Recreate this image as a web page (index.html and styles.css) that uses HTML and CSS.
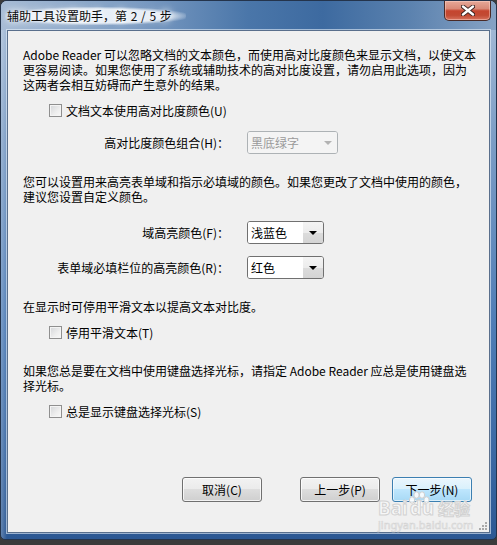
FILE: index.html
```html
<!DOCTYPE html>
<html lang="zh-CN">
<head>
<meta charset="utf-8">
<title>辅助工具设置助手</title>
<link rel="stylesheet" href="styles.css">
</head>
<body>
<div class="window">
  <div class="titlebar">
    <span class="title">辅助工具设置助手，第 2 / 5 步</span>
    <div class="close">
      <svg width="14" height="11" viewBox="0 0 14 11">
        <path d="M2 1.5 L12 9.5 M12 1.5 L2 9.5" stroke="#3a2220" stroke-width="4.2" stroke-linecap="round"/>
        <path d="M2 1.5 L12 9.5 M12 1.5 L2 9.5" stroke="#ffffff" stroke-width="2.4" stroke-linecap="round"/>
      </svg>
    </div>
  </div>
  <div class="client">
    <p class="para p1">Adobe Reader 可以忽略文档的文本颜色，而使用高对比度颜色来显示文档，以使文本<br>更容易阅读。如果您使用了系统或辅助技术的高对比度设置，请勿启用此选项，因为<br>这两者会相互妨碍而产生意外的结果。</p>
    <label class="check c1"><span class="box"></span><span>文档文本使用高对比度颜色(U)</span></label>
    <div class="field f-h">
      <span class="flabel">高对比度颜色组合(H)：</span>
      <div class="combo wide disabled"><span class="ctext">黑底绿字</span><span class="arrow"></span></div>
    </div>
    <p class="para p2">您可以设置用来高亮表单域和指示必填域的颜色。如果您更改了文档中使用的颜色，<br>建议您设置自定义颜色。</p>
    <div class="field f-f">
      <span class="flabel">域高亮颜色(F)：</span>
      <div class="combo"><span class="ctext">浅蓝色</span><span class="arrow"></span></div>
    </div>
    <div class="field f-r">
      <span class="flabel">表单域必填栏位的高亮颜色(R)：</span>
      <div class="combo"><span class="ctext">红色</span><span class="arrow"></span></div>
    </div>
    <p class="para p3">在显示时可停用平滑文本以提高文本对比度。</p>
    <label class="check c2"><span class="box"></span><span>停用平滑文本(T)</span></label>
    <p class="para p4">如果您总是要在文档中使用键盘选择光标，请指定 Adobe Reader 应总是使用键盘选<br>择光标。</p>
    <label class="check c3"><span class="box"></span><span>总是显示键盘选择光标(S)</span></label>
    <div class="buttons">
      <button class="btn cancel">取消(C)</button>
      <button class="btn">上一步(P)</button>
      <button class="btn default">下一步(N)</button>
    </div>
    <div class="watermark">
      <svg class="paw" width="26" height="18" viewBox="0 0 26 18">
        <g fill="#ffffff" fill-opacity="0.85" stroke="#cfcfcf" stroke-width="1">
          <ellipse cx="6" cy="9" rx="2.6" ry="3.2"/>
          <ellipse cx="10.5" cy="4" rx="2.6" ry="3.2"/>
          <ellipse cx="16" cy="4" rx="2.6" ry="3.2"/>
          <ellipse cx="20.5" cy="9" rx="2.6" ry="3.2"/>
          <path d="M8 16 C8 11 11 9 13 9 C15 9 18 11 18 16 Z"/>
        </g>
      </svg>
      <div class="wm-main">Bai<span class="wm-du">du</span><span class="wm-cn">经验</span></div>
      <div class="wm-url">jingyan.baidu.com</div>
    </div>
    <svg class="grip" width="10" height="10" viewBox="0 0 10 10">
      <g fill="#a9a9a9">
        <rect x="7" y="1" width="2" height="2"/>
        <rect x="4" y="4" width="2" height="2"/>
        <rect x="7" y="4" width="2" height="2"/>
        <rect x="1" y="7" width="2" height="2"/>
        <rect x="4" y="7" width="2" height="2"/>
        <rect x="7" y="7" width="2" height="2"/>
      </g>
    </svg>
  </div>
</div>
</body>
</html>
```

FILE: styles.css
```css
html, body {
  margin: 0;
  padding: 0;
}
body {
  width: 497px;
  height: 545px;
  background: #3b3b3b;
  font-family: "Noto Sans CJK SC", "Noto Sans", sans-serif;
  font-size: 12px;
  color: #000;
  overflow: hidden;
}
.window {
  box-sizing: border-box;
  width: 497px;
  height: 540px;
  border: 1px solid #24344c;
  border-radius: 7px 7px 5px 5px;
  display: flex;
  flex-direction: column;
  overflow: hidden;
  background:
    linear-gradient(90deg, rgba(255,255,255,0.25) 0px, rgba(255,255,255,0) 6px),
    linear-gradient(180deg, #a9bed8 0%, #7d9ec6 25%, #4f7db6 60%, #3a68a3 85%, #2c5893 100%);
}
.titlebar {
  height: 29px;
  flex: none;
  display: flex;
  align-items: flex-start;
  background: linear-gradient(90deg, #a7bcd5 0%, #7b9bc2 28%, #4a76a9 50%, #3d6aa0 65%, #5a81ae 82%, #86a2c4 100%);
}
.title {
  margin-top: 6px;
  margin-left: 4px;
  line-height: 18px;
  color: #0b0b0b;
  white-space: nowrap;
  word-spacing: 1px;
  border-radius: 10px;
  background: radial-gradient(ellipse at center, rgba(236,242,249,0.95) 55%, rgba(236,242,249,0) 75%);
  padding: 0 14px 0 2px;
  text-shadow: 0 0 6px #fff, 0 0 10px #fff;
}
.close {
  margin-left: auto;
  margin-right: 5px;
  width: 47px;
  height: 20px;
  box-sizing: border-box;
  border: 1px solid #4a2a26;
  border-top: none;
  border-radius: 0 0 5px 5px;
  background: linear-gradient(180deg, #e6a898 0%, #d98a78 40%, #c5452f 52%, #c24a33 75%, #d7735e 100%);
  box-shadow: inset 0 0 0 1px rgba(255,220,210,0.45);
  display: flex;
  align-items: center;
  justify-content: center;
}
.close svg { display: block; }
.client {
  flex: 1;
  margin: 0 6px 6px 6px;
  border: 1px solid #596f8c;
  box-shadow: 0 0 0 1px rgba(230,240,250,0.6);
  background: #f0f0f0;
  padding: 0 17px 30px 15px;
  display: flex;
  flex-direction: column;
  position: relative;
}
.para {
  margin: 0;
  line-height: 15px;
  white-space: nowrap;
}
.p1 { margin-top: 16px; }
.p2 { margin-top: 20px; }
.p3 { margin-top: 20px; }
.p4 { margin-top: 23px; }

.check {
  display: flex;
  align-items: center;
  line-height: 15px;
  height: 15px;
  margin-left: 26px;
  gap: 4px;
}
.c1 { margin-top: 11px; }
.c2 { margin-top: 11px; }
.c3 { margin-top: 11px; }
.box {
  width: 13px;
  height: 13px;
  box-sizing: border-box;
  border: 1px solid #8f8f8f;
  background: linear-gradient(135deg, #d3d5d8 0%, #eeeeee 60%, #f8f8f8 100%);
  box-shadow: inset 0 0 0 1px #f4f4f4;
  flex: none;
}

.field {
  display: flex;
  align-items: center;
  height: 23px;
}
.f-h { margin-top: 13px; }
.f-f { margin-top: 17px; }
.f-r { margin-top: 12px; }
.flabel {
  width: 206px;
  text-align: right;
  white-space: nowrap;
  margin-right: 18px;
  flex: none;
}
.combo {
  box-sizing: border-box;
  width: 77px;
  height: 23px;
  border: 1px solid #707070;
  border-radius: 3px;
  display: flex;
  overflow: hidden;
  background: #fff;
}
.combo.wide { width: 91px; }
.ctext {
  flex: 1;
  padding-left: 3px;
  line-height: 21px;
  white-space: nowrap;
  background: #fff;
}
.arrow {
  width: 20px;
  flex: none;
  position: relative;
  background: linear-gradient(180deg, #f4f4f4 0%, #ececec 50%, #dcdcdc 51%, #d4d4d4 100%);
}
.arrow::after {
  content: "";
  position: absolute;
  left: 6px;
  top: 9px;
  border-left: 4px solid transparent;
  border-right: 4px solid transparent;
  border-top: 4px solid #000;
}
.combo.disabled {
  border-color: #adb2b5;
  background: #f4f4f4;
}
.combo.disabled .ctext {
  background: #f4f4f4;
  color: #9a9a9a;
}
.combo.disabled .arrow {
  background: #f4f4f4;
}
.combo.disabled .arrow::after {
  border-top-color: #b3b3b3;
  left: 7px;
}

.buttons {
  margin-top: auto;
  display: flex;
  justify-content: flex-end;
  gap: 12px;
}
.btn {
  box-sizing: border-box;
  width: 80px;
  height: 25px;
  font-family: inherit;
  font-size: 12px;
  color: #000;
  border: 1px solid #707070;
  border-radius: 3px;
  padding: 0;
  background: linear-gradient(180deg, #f2f2f2 0%, #ebebeb 48%, #dddddd 50%, #cfcfcf 100%);
  box-shadow: inset 0 0 0 1px rgba(255,255,255,0.75);
}
.btn.cancel { margin-right: 26px; }
.btn.default {
  border-color: #3c7fb1;
  background: linear-gradient(180deg, #eaf6fd 0%, #d9f0fc 48%, #bee6fd 50%, #a7d9f5 100%);
  box-shadow: inset 0 0 0 1px rgba(255,255,255,0.6);
}

.watermark {
  position: absolute;
  right: 19px;
  bottom: 0px;
  width: 92px;
  height: 42px;
  pointer-events: none;
}
.paw {
  position: absolute;
  left: 28px;
  top: 1px;
}
.wm-main {
  position: absolute;
  left: 0;
  top: 9px;
  font-family: "Noto Sans", "Noto Sans CJK SC", sans-serif;
  font-size: 19px;
  font-weight: bold;
  line-height: 19px;
  color: rgba(248,248,248,0.9);
  -webkit-text-stroke: 1px #d2d2d2;
  white-space: nowrap;
}
.wm-du { margin-left: 2px; }
.wm-cn {
  font-family: "Noto Sans CJK SC", sans-serif;
  font-size: 16px;
  margin-left: 4px;
}
.wm-url {
  position: absolute;
  left: 0;
  top: 29px;
  font-family: "Noto Sans", sans-serif;
  font-size: 11px;
  line-height: 12px;
  color: #f4f4f4;
  -webkit-text-stroke: 0.6px #d4d4d4;
  white-space: nowrap;
}
.grip {
  position: absolute;
  right: 1px;
  bottom: 1px;
}
```
